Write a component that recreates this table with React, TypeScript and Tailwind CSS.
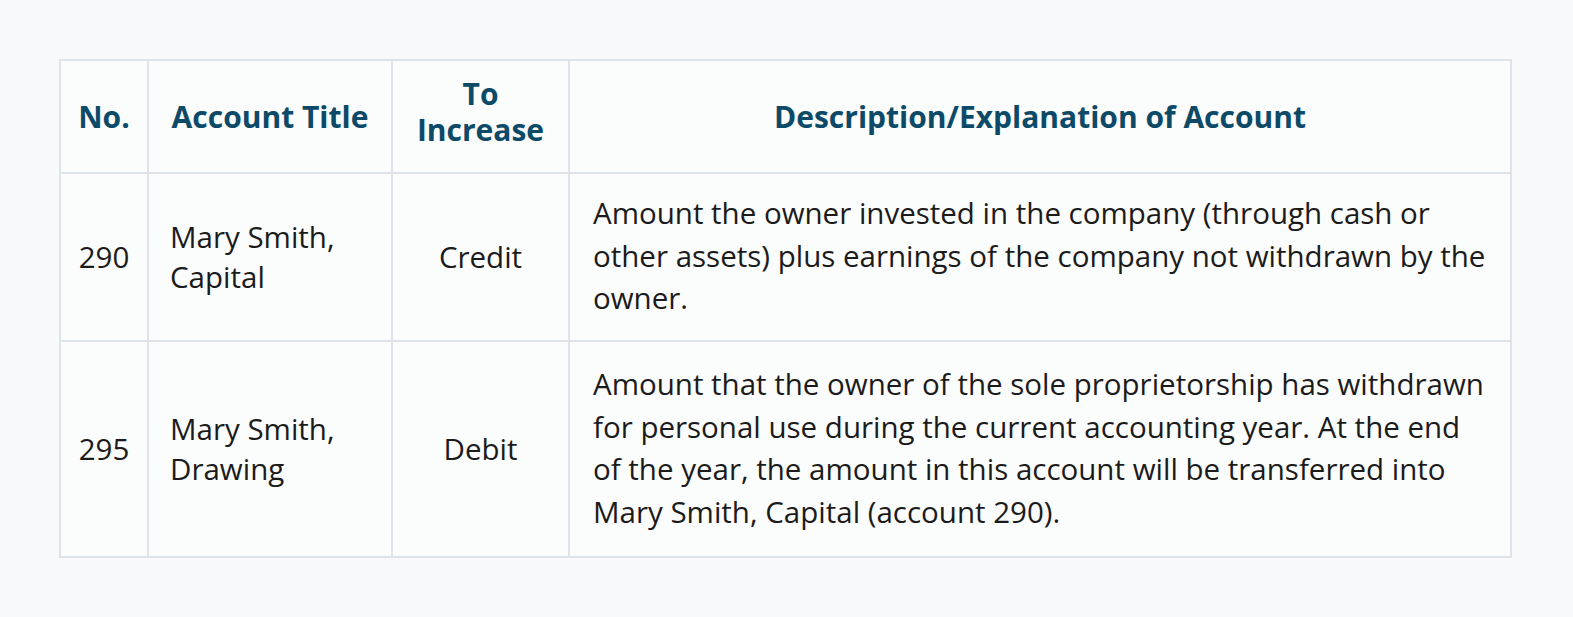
const rows = [
  {
    no: "290",
    title: ["Mary Smith,", "Capital"],
    increase: "Credit",
    description:
      "Amount the owner invested in the company (through cash or other assets) plus earnings of the company not withdrawn by the owner.",
    height: "h-[168px]",
  },
  {
    no: "295",
    title: ["Mary Smith,", "Drawing"],
    increase: "Debit",
    description:
      "Amount that the owner of the sole proprietorship has withdrawn for personal use during the current accounting year. At the end of the year, the amount in this account will be transferred into Mary Smith, Capital (account 290).",
    height: "h-[216px]",
  },
];

export default function App() {
  return (
    <div className="min-h-[617px] bg-[#f8f9fa] pl-[59px] pt-[59px] font-['Open_Sans',sans-serif]">
      <table className="w-[1453px] table-fixed border-collapse border-2 border-[#dde5ea] bg-[#fbfcfc]">
        <colgroup>
          <col className="w-[88px]" />
          <col className="w-[244px]" />
          <col className="w-[177px]" />
          <col />
        </colgroup>
        <thead>
          <tr className="h-[113px] text-[30px] font-bold leading-[36px] text-[#0d4a68]">
            <th className="border-2 border-[#dde5ea] px-1 text-center">No.</th>
            <th className="border-2 border-[#dde5ea] px-2 text-center">Account Title</th>
            <th className="border-2 border-[#dde5ea] px-2 pb-[10px] text-center">
              To
              <br />
              Increase
            </th>
            <th className="border-2 border-[#dde5ea] px-6 text-center">
              Description/Explanation of Account
            </th>
          </tr>
        </thead>
        <tbody className="text-[29.5px] leading-[42.5px] text-[#1b1b1b]">
          {rows.map((row) => (
            <tr key={row.no} className={row.height}>
              <td className="border-2 border-[#dde5ea] px-1 text-center">{row.no}</td>
              <td className="border-2 border-[#dde5ea] pl-[21px] pr-2 leading-[40px]">
                {row.title[0]}
                <br />
                {row.title[1]}
              </td>
              <td className="border-2 border-[#dde5ea] px-2 text-center">{row.increase}</td>
              <td className="border-2 border-[#dde5ea] pb-[2px] pl-[23px] pr-[22px]">{row.description}</td>
            </tr>
          ))}
        </tbody>
      </table>
    </div>
  );
}
